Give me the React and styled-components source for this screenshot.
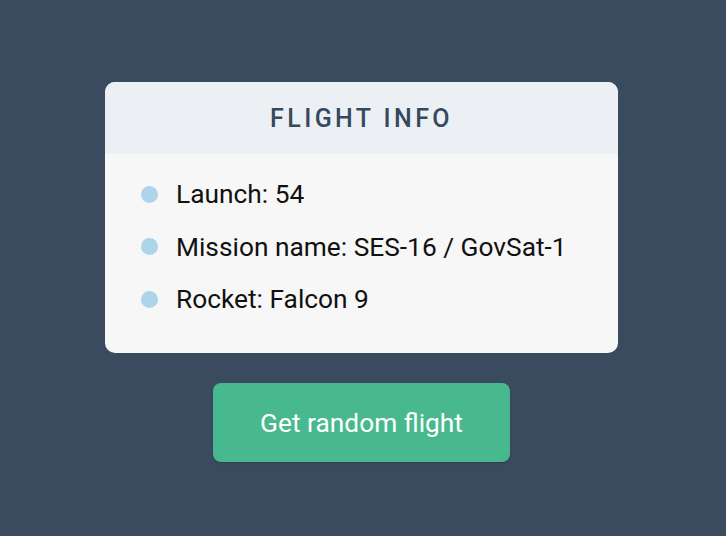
import React from 'react';
import styled, { createGlobalStyle } from 'styled-components';

const GlobalStyle = createGlobalStyle`
  html, body {
    margin: 0;
    padding: 0;
    background: #3b4b5f;
  }
  body {
    font-family: Roboto, "Liberation Sans", sans-serif;
  }
`;

const Page = styled.div`
  width: 726px;
  height: 536px;
  box-sizing: border-box;
  padding: 82px 3px 0 0;
  display: flex;
  flex-direction: column;
  align-items: center;
  background: #3b4b5f;
`;

const Card = styled.div`
  width: 513px;
  height: 271px;
  border-radius: 10px;
  overflow: hidden;
  background: #f7f7f7;
  display: flex;
  flex-direction: column;
`;

const CardHeader = styled.div`
  height: 72px;
  background: #ecf0f5;
  display: flex;
  align-items: center;
  justify-content: center;
`;

const Title = styled.h2`
  margin: 0;
  font-size: 25px;
  font-weight: 500;
  letter-spacing: 3.4px;
  color: #35495e;
`;

const List = styled.ul`
  list-style: none;
  margin: 0;
  padding: 23px 0 0 36px;
  display: flex;
  flex-direction: column;
  gap: 18.5px;
`;

const Item = styled.li`
  display: flex;
  align-items: center;
  gap: 18px;
  height: 34px;
  font-size: 26.3px;
  color: #111;
`;

const Dot = styled.span`
  width: 17px;
  height: 17px;
  border-radius: 50%;
  background: #acd4ea;
  flex-shrink: 0;
`;

const Button = styled.button`
  margin-top: 30px;
  width: 297px;
  height: 79px;
  border: none;
  border-radius: 8px;
  background: #48b98e;
  color: #fff;
  font-family: Roboto, "Liberation Sans", sans-serif;
  font-size: 26.3px;
  box-shadow: 0 1px 2px rgba(0, 0, 0, 0.2);
  cursor: pointer;
`;

const flight = {
  launch: 54,
  mission: 'SES-16 / GovSat-1',
  rocket: 'Falcon 9',
};

export default function App() {
  return (
    <Page>
      <GlobalStyle />
      <Card>
        <CardHeader>
          <Title>FLIGHT INFO</Title>
        </CardHeader>
        <List>
          <Item><Dot />Launch: {flight.launch}</Item>
          <Item><Dot />Mission name: {flight.mission}</Item>
          <Item><Dot />Rocket: {flight.rocket}</Item>
        </List>
      </Card>
      <Button>Get random flight</Button>
    </Page>
  );
}
